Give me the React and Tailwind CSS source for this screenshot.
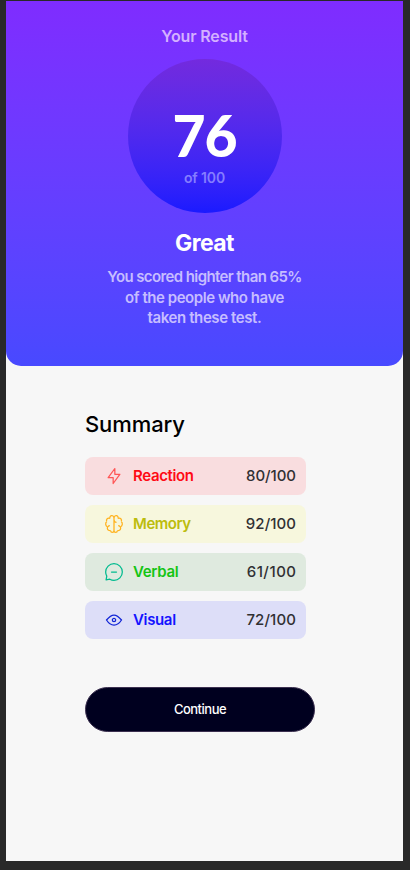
import React from "react";

function Icon({ color, children }) {
  return (
    <svg width="20" height="20" viewBox="0 0 20 20" fill="none" stroke={color} strokeWidth="1.25" className="shrink-0">
      {children}
    </svg>
  );
}

const rows = [
  {
    name: "Reaction",
    score: "80/100",
    scoreStyle: "tracking-[-0.05px]",
    bg: "bg-[#f9dddf]",
    text: "text-[#ff0a14] tracking-[-0.35px]",
    icon: (
      <Icon color="#ff5555">
        <path strokeLinecap="round" strokeLinejoin="round" d="M10.833 8.333V2.5l-6.666 9.167h5V17.5l6.666-9.167h-5Z" />
      </Icon>
    ),
  },
  {
    name: "Memory",
    score: "92/100",
    scoreStyle: "tracking-[0.05px]",
    bg: "bg-[#f7f7dd]",
    text: "text-[#bcbc0c] tracking-[-0.45px]",
    icon: (
      <Icon color="#ffb21e">
        <path d="M5.833 11.667a2.5 2.5 0 1 0 .834 4.858" />
        <path d="M3.553 13.004a3.333 3.333 0 0 1-.728-5.53m.025-.067a2.083 2.083 0 0 1 2.983-2.824m.199.054A2.083 2.083 0 1 1 10 3.75v12.917a1.667 1.667 0 0 1-3.333 0M10 5.833a2.5 2.5 0 0 0 2.5 2.5m1.667 3.334a2.5 2.5 0 1 1-.834 4.858" />
        <path d="M16.447 13.004a3.334 3.334 0 0 0 .728-5.53m-.025-.067a2.083 2.083 0 0 0-2.983-2.824M10 3.75a2.085 2.085 0 0 1 2.538-2.033 2.084 2.084 0 0 1 1.43 2.92m-.635 12.03a1.667 1.667 0 0 1-3.333 0" />
      </Icon>
    ),
  },
  {
    name: "Verbal",
    score: "61/100",
    scoreStyle: "tracking-[0.5px] -mr-[0.5px]",
    bg: "bg-[#dfeadf]",
    text: "text-[#14c414] tracking-[-0.3px]",
    icon: (
      <Icon color="#00bb8f">
        <path strokeLinecap="round" strokeLinejoin="round" d="M7.5 10h5M10 18.333A8.333 8.333 0 1 0 1.667 10c0 1.518.406 2.942 1.115 4.167l-.699 3.75 3.75-.699A8.295 8.295 0 0 0 10 18.333Z" />
      </Icon>
    ),
  },
  {
    name: "Visual",
    score: "72/100",
    scoreStyle: "tracking-[0.1px]",
    bg: "bg-[#dddef8]",
    text: "text-[#1414ff] tracking-[-0.35px]",
    icon: (
      <Icon color="#1125d6">
        <path d="M10 11.667a1.667 1.667 0 1 0 0-3.334 1.667 1.667 0 0 0 0 3.334Z" />
        <path d="M17.5 10c-1.574 2.492-4.402 5-7.5 5s-5.926-2.508-7.5-5C4.416 7.632 6.66 5 10 5s5.584 2.632 7.5 5Z" />
      </Icon>
    ),
  },
];

export default function App() {
  return (
    <div className="h-[870px] w-[410px] overflow-hidden bg-[#292929] pt-px pl-1.5 font-['Inter',sans-serif]">
      <main className="h-[860px] w-[397px] bg-[#f7f7f7]">
        <section className="flex h-[364.5px] flex-col items-center rounded-b-[15px] bg-linear-to-b from-[#7f2cff] to-[#4849ff] pt-[23px] text-center">
          <h1 className="text-[16px] leading-6 font-semibold tracking-[-0.15px] text-[#d4b0ff]">Your Result</h1>
          <div className="mt-[11px] flex size-[154px] flex-col items-center rounded-full bg-linear-to-b from-[#732ade] to-[#1a1aff] pt-[46px]">
            <span className="font-['Lato',sans-serif] text-[57px] leading-[60px] font-black tracking-[-1px] text-white">76</span>
            <span className="mt-[3px] text-[14px] leading-5 font-semibold tracking-[-0.15px] text-[#857dff]">of 100</span>
          </div>
          <h2 className="mt-[15px] text-[23px] leading-[30px] font-bold tracking-[-0.6px] text-white">Great</h2>
          <p className="mt-[9px] text-[15px] leading-[20.5px] font-semibold whitespace-nowrap text-[#c6bdff]">
            <span className="tracking-[-0.6px]">You scored highter than 65%</span><br />
            <span className="tracking-[-0.45px]">of the people who have</span><br />
            <span className="tracking-[-0.4px]">taken these test.</span>
          </p>
        </section>
        <section className="pt-[42px] pl-[79px]">
          <h2 className="text-[22px] leading-8 font-medium tracking-[-0.1px] text-black">Summary</h2>
          <ul className="mt-[17.5px] flex w-[220.5px] flex-col gap-2.5">
            {rows.map((row) => (
              <li key={row.name} className={`flex h-[38px] items-center rounded-lg pr-[9.5px] pl-[18.5px] text-[15px] ${row.bg}`}>
                {row.icon}
                <span className={`mt-px ml-[9.5px] font-semibold ${row.text}`}>{row.name}</span>
                <span className={`mt-px ml-auto font-medium text-[#303033] ${row.scoreStyle}`}>{row.score}</span>
              </li>
            ))}
          </ul>
          <button className="mt-12 flex h-[45px] w-[230px] items-center justify-center rounded-full border border-[#3c3050] bg-[#00001f] text-[13px] font-medium tracking-[-0.5px] text-white">Continue</button>
        </section>
      </main>
    </div>
  );
}
